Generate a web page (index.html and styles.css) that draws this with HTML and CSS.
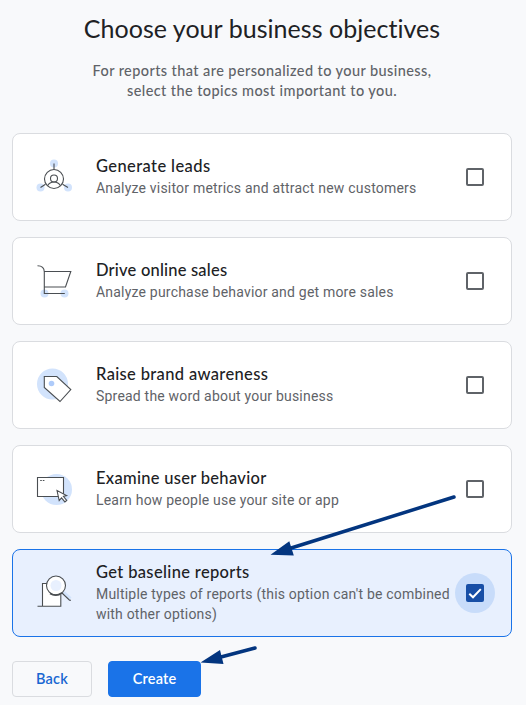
FILE: index.html
```html
<!DOCTYPE html>
<html lang="en">
<head>
<meta charset="utf-8">
<title>Choose your business objectives</title>
<link rel="stylesheet" href="styles.css">
</head>
<body>
<main class="page">
  <h1 class="title">Choose your business objectives</h1>
  <p class="intro">For reports that are personalized to your business,<br>select the topics most important to you.</p>

  <div class="cards">
    <label class="card">
      <svg class="icon" viewBox="0 0 36 36">
        <g fill="#d2e3fc"><circle cx="18" cy="4.500" r="4"/><circle cx="4.500" cy="28.500" r="4"/><circle cx="32" cy="28.500" r="4"/></g>
        <g class="line"><circle cx="18" cy="20" r="9.500"/><circle cx="18" cy="19.500" r="3.500"/><path d="M11.500 26.800C13 24 15 23 18 23s5 1 6.500 3.800M18 4.500v6M9.500 25.200l-5 3.300M26.500 25.200l5.500 3.300"/></g>
      </svg>
      <span class="copy"><span class="name n1">Generate leads</span><span class="desc">Analyze visitor metrics and attract new customers</span></span>
      <span class="check"><span class="box"></span></span>
    </label>
    <label class="card">
      <svg class="icon" viewBox="0 0 36 36">
        <g fill="#d2e3fc"><circle cx="8.500" cy="30.500" r="4"/><circle cx="28.500" cy="30.500" r="4"/></g>
        <path class="line" d="M1.500 2.800C6 2.800 8.300 5 8.300 9v21.500h20.500M8.300 8.500h26.500L29.500 24H8.300"/>
      </svg>
      <span class="copy"><span class="name n2">Drive online sales</span><span class="desc">Analyze purchase behavior and get more sales</span></span>
      <span class="check"><span class="box"></span></span>
    </label>
    <label class="card">
      <svg class="icon" viewBox="0 0 36 36">
        <circle cx="16.500" cy="17" r="15.500" fill="#d2e3fc"/>
        <path class="line paper" d="M8.300 9.500h12.500L34.800 22.500 24 34.500 8.300 20.500z"/>
        <circle cx="15.500" cy="16.500" r="2.800" fill="#aecbfa"/>
      </svg>
      <span class="copy"><span class="name n3">Raise brand awareness</span><span class="desc">Spread the word about your business</span></span>
      <span class="check"><span class="box"></span></span>
    </label>
    <label class="card">
      <svg class="icon" viewBox="0 0 36 36">
        <circle cx="20.500" cy="18.500" r="15.500" fill="#d2e3fc"/>
        <path class="line paper" d="M1.500 6.500h26v19h-26z"/>
        <path class="line" d="M4.200 9.500h1.600M6.800 9.500h1.600"/>
        <path class="line paper" d="M21 19.500l2.200 10 2.300-2.600 3.400 4 1.800-1.500-3.300-4 3.200-.9z"/>
      </svg>
      <span class="copy"><span class="name n4">Examine user behavior</span><span class="desc">Learn how people use your site or app</span></span>
      <span class="check"><span class="box"></span></span>
    </label>
    <label class="card selected">
      <svg class="icon" viewBox="0 0 36 36">
        <path d="M6.500 8.500h18.300v22.800H6.500z" fill="#fff"/>
        <path class="line" d="M12 8.500H6.500v22.800M1.500 31.300h23.300V19.500"/>
        <path d="M27.500 17l7 6.500" stroke="#d2e3fc" stroke-width="3"/>
        <path class="line" d="M26 18l7.500 7.200H35"/>
        <circle class="line paper" cx="20" cy="10.500" r="9.500"/>
        <circle cx="20" cy="10.500" r="5.500" fill="#e8f0fe"/>
        <path class="line shade" d="M14 18.500q6 3.500 12-.5"/>
      </svg>
      <span class="copy"><span class="name n5">Get baseline reports</span><span class="desc">Multiple types of reports (this option can't be combined<br>with other options)</span></span>
      <span class="check"><span class="box"><svg class="tick" viewBox="0 0 18 18"><path d="M3.300 9.700l3.700 3.600 7.800-8.200"/></svg></span></span>
    </label>
  </div>

  <div class="actions">
    <button class="btn back">Back</button>
    <button class="btn create">Create</button>
  </div>
</main>
<svg class="arrows" viewBox="0 0 526 705">
  <path d="M454 497L288 549M255 648L220 657.300"/>
  <path class="head" d="M270.500 554.700L289.300 541.200 293.800 555.500zM200.500 662.500L220 650 223.500 664z"/>
</svg>
</body>
</html>
```
FILE: styles.css
```css
* { box-sizing: border-box; }

body {
  margin: 0;
  height: 705px;
  overflow: hidden;
  background: #f8f9fb;
  font-family: Roboto, sans-serif;
}

.page { width: 500px; margin-left: 12px; padding-top: 11px; }

.title {
  margin: 0;
  font: 400 25px/34px Lato, sans-serif;
  letter-spacing: 0.04px;
  text-align: center;
  color: #202124;
}

.intro {
  margin: 16px 0 0;
  height: 40px;
  font: 500 14.5px/20px Lato, sans-serif;
  letter-spacing: 0.41px;
  text-align: center;
  color: #5f6368;
  white-space: nowrap;
}

.cards { display: flex; flex-direction: column; gap: 16px; margin-top: 32px; }

.card {
  display: flex;
  align-items: center;
  height: 88px;
  padding: 0 16px 0 23px;
  border: 1px solid #dadce0;
  border-radius: 8px;
  background: #fff;
}

.selected { background: #e8f0fe; border-color: #1a73e8; }

.icon { flex: none; width: 36px; height: 36px; margin-right: 24px; }

.line { fill: none; stroke: #4a4e52; stroke-width: 1.1; }
.paper { fill: #fff; }
.shade { stroke-width: 1.8; }

.copy { flex: 1; white-space: nowrap; }
.name, .desc { display: block; }
.name {
  margin-top: -1px;
  padding-bottom: 1px;
  font: 500 16.5px/22px Lato, sans-serif;
  color: #202124;
}
.n1 { letter-spacing: 0.4px; }
.n2 { letter-spacing: 0.2px; }
.n3 { letter-spacing: 0.35px; }
.n4 { letter-spacing: 0.3px; }
.n5 { letter-spacing: 0.35px; }
.desc { font-size: 14px; line-height: 20px; letter-spacing: 0.2px; color: #5f6368; }

.check {
  flex: none;
  display: flex;
  align-items: center;
  justify-content: center;
  width: 40px;
  height: 40px;
  border-radius: 50%;
}

.box { width: 18px; height: 18px; border: 2px solid #5f6368; border-radius: 2px; }
.selected .check { background: #c8dcfa; }
.selected .box { border: 0; background: #174ea6; }
.tick { display: block; width: 18px; height: 18px; fill: none; stroke: #fff; stroke-width: 2; }

.actions { display: flex; gap: 16px; margin-top: 24px; }

.btn {
  height: 36px;
  padding: 0;
  border: 1px solid #dadce0;
  border-radius: 4px;
  background: transparent;
  font: 600 14.5px/34px Lato, sans-serif;
  letter-spacing: 0.2px;
  color: #1967d2;
}

.back { width: 80px; }
.create { width: 93px; border-color: #1a73e8; background: #1a73e8; color: #fff; }

.arrows { position: absolute; left: 0; top: 0; width: 526px; height: 705px; pointer-events: none; }
.arrows path { fill: none; stroke: #03357f; stroke-width: 3.5; stroke-linecap: round; }
.arrows .head { fill: #03357f; stroke: none; }
```
